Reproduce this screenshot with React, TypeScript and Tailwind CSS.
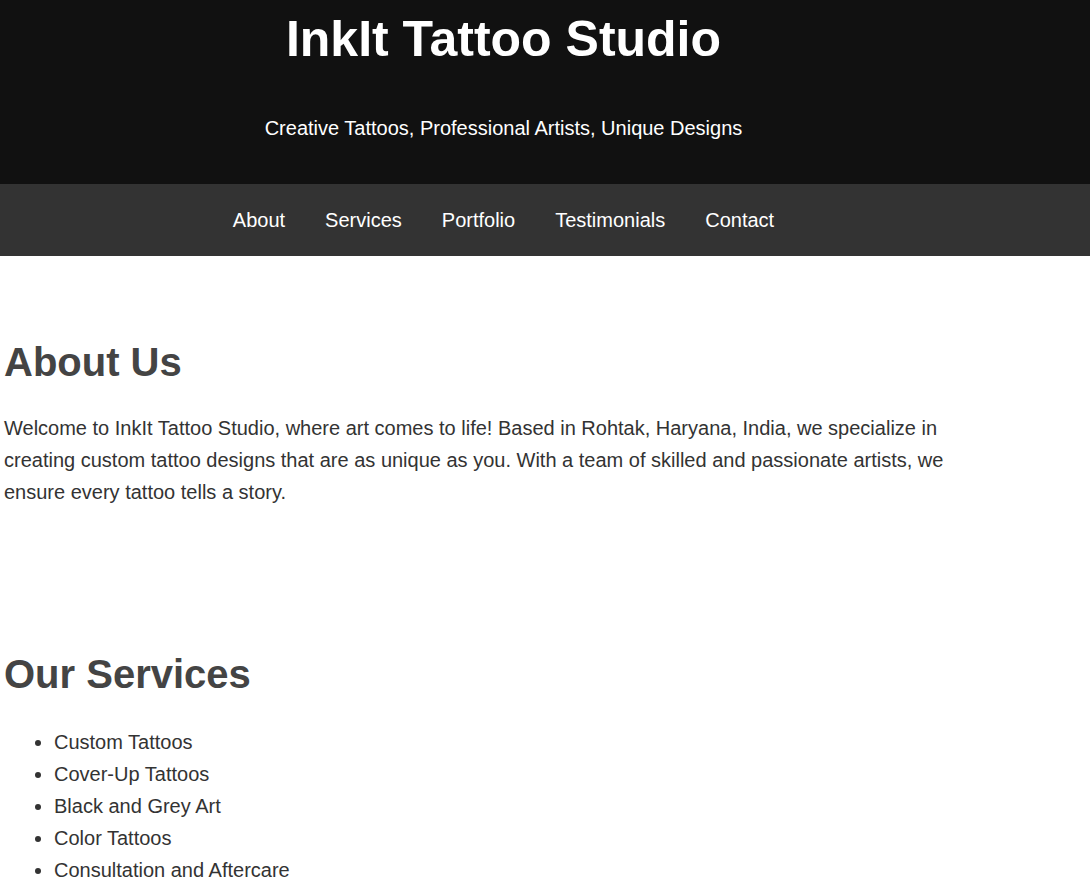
export default function App() {
  const services = [
    "Custom Tattoos",
    "Cover-Up Tattoos",
    "Black and Grey Art",
    "Color Tattoos",
    "Consultation and Aftercare",
  ];
  const links = ["About", "Services", "Portfolio", "Testimonials", "Contact"];
  return (
    <div className="min-h-[892px] bg-white font-['Liberation_Sans',Arial,sans-serif] text-[#333]">
      <header className="bg-[#111] h-[184px]">
        <div className="w-[1007px] text-center text-white pt-[14px]">
          <h1 className="text-[50px] leading-none font-bold">InkIt Tattoo Studio</h1>
          <p className="text-[20px] leading-none mt-[54px]">Creative Tattoos, Professional Artists, Unique Designs</p>
        </div>
      </header>
      <nav className="bg-[#333] h-[72px]">
        <ul className="w-[1007px] flex justify-center pt-[26px]">
          {links.map((l) => (
            <li key={l} className="mx-[20px]">
              <a className="text-white text-[20px] leading-none">{l}</a>
            </li>
          ))}
        </ul>
      </nav>
      <main className="w-[1007px] px-[4px]">
        <section className="pt-[86px]">
          <h2 className="text-[40px] leading-none font-bold text-[#444]">About Us</h2>
          <p className="text-[20px] leading-[32px] mt-[30px] pr-[4px]">
            Welcome to InkIt Tattoo Studio, where art comes to life! Based in Rohtak, Haryana, India, we specialize in creating custom tattoo designs that are as unique as you. With a team of skilled and passionate artists, we ensure every tattoo tells a story.
          </p>
        </section>
        <section className="pt-[146px]">
          <h2 className="text-[40px] leading-none font-bold text-[#444]">Our Services</h2>
          <ul className="list-disc pl-[50px] mt-[32px] text-[20px] leading-[32px]">
            {services.map((s) => (
              <li key={s}>{s}</li>
            ))}
          </ul>
        </section>
      </main>
    </div>
  );
}
